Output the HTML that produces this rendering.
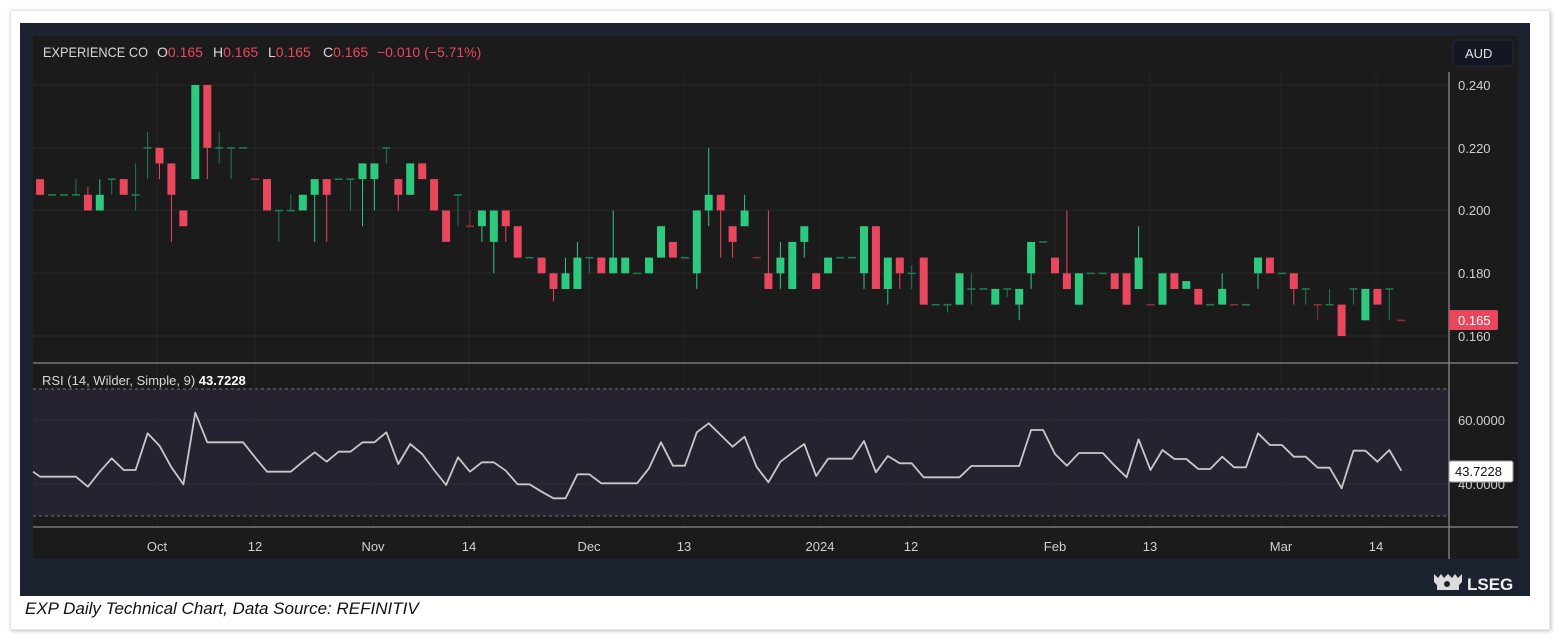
<!DOCTYPE html>
<html><head><meta charset="utf-8">
<style>
html,body{margin:0;padding:0;background:#fff;width:1561px;height:640px;overflow:hidden;font-family:"Liberation Sans",sans-serif}
.card{position:absolute;left:10px;top:10px;width:1538px;height:618px;background:#fff;box-shadow:1px 1px 4px rgba(0,0,0,.25);border:1px solid #e6e6e6}
.frame{position:absolute;left:20px;top:23px;width:1510px;height:573px;background:#1d2230}
svg{position:absolute;left:0;top:0}
.cap{position:absolute;left:25px;top:599px;font-style:italic;font-size:17px;color:#111}
</style></head><body>
<div class="card"></div>
<div class="frame"></div>
<svg id="s" width="1561" height="640" xmlns="http://www.w3.org/2000/svg" font-family="Liberation Sans, sans-serif">
<rect x="33" y="36" width="1485" height="523" fill="#1b1b1b"/>
<rect x="33" y="389" width="1416" height="127" fill="#262230"/>
<g stroke="#272727" stroke-width="1">
<line x1="33" y1="85" x2="1449" y2="85"/><line x1="33" y1="148" x2="1449" y2="148"/><line x1="33" y1="210" x2="1449" y2="210"/><line x1="33" y1="273" x2="1449" y2="273"/><line x1="33" y1="336" x2="1449" y2="336"/>
<line x1="33" y1="420" x2="1449" y2="420" stroke="#312c3a"/><line x1="33" y1="484" x2="1449" y2="484" stroke="#312c3a"/>
</g>
<g id="vg" stroke="#252525" stroke-width="1"></g>
<line x1="33" y1="389" x2="1449" y2="389" stroke="#777" stroke-dasharray="3,3"/>
<line x1="33" y1="516" x2="1449" y2="516" stroke="#777" stroke-dasharray="3,3"/>
<line x1="33" y1="363" x2="1518" y2="363" stroke="#8a8a8a" stroke-width="1.3"/>
<line x1="33" y1="527" x2="1518" y2="527" stroke="#8a8a8a" stroke-width="1.3"/>
<line x1="1449" y1="72" x2="1449" y2="559" stroke="#8a8a8a" stroke-width="1.3"/>
<g id="c"></g>
<polyline id="r" fill="none" stroke="#c8c8c8" stroke-width="1.8" stroke-linejoin="round"/>
<g font-size="14" fill="#d8d8d8">
<text x="43" y="57" textLength="105" lengthAdjust="spacingAndGlyphs">EXPERIENCE CO</text>
<text x="157" y="57">O<tspan fill="#e8475e">0.165</tspan></text>
<text x="213" y="57">H<tspan fill="#e8475e">0.165</tspan></text>
<text x="268" y="57">L<tspan fill="#e8475e">0.165</tspan></text>
<text x="323" y="57">C<tspan fill="#e8475e">0.165</tspan></text>
<text x="377" y="57" fill="#e8475e">−0.010 (−5.71%)</text>
</g>
<rect x="1453" y="40" width="60" height="26" rx="4" fill="#131722" stroke="#252a36"/>
<text x="1465" y="58" font-size="13" fill="#e0e0e0">AUD</text>
<g font-size="13" fill="#d0d0d0">
<text x="1458" y="90">0.240</text><text x="1458" y="153">0.220</text><text x="1458" y="215">0.200</text><text x="1458" y="278">0.180</text><text x="1458" y="341">0.160</text>
<text x="1458" y="425">60.0000</text><text x="1458" y="489">40.0000</text>
</g>
<rect x="1449" y="310" width="49" height="20" rx="2" fill="#e8475e"/>
<text x="1458" y="325" font-size="13" fill="#fff">0.165</text>
<rect x="1449" y="461" width="64" height="21" rx="2" fill="#fff" stroke="#999"/>
<text x="1455" y="476" font-size="13" fill="#111">43.7228</text>
<text x="42" y="385" font-size="13" fill="#d8d8d8">RSI (14, Wilder, Simple, 9)  <tspan font-weight="bold" fill="#fff">43.7228</tspan></text>
<g font-size="13" fill="#d0d0d0" text-anchor="middle">
<text x="157" y="551">Oct</text><text x="255" y="551">12</text><text x="373" y="551">Nov</text><text x="469" y="551">14</text><text x="589" y="551">Dec</text><text x="684" y="551">13</text><text x="820" y="551">2024</text><text x="911" y="551">12</text><text x="1055" y="551">Feb</text><text x="1150" y="551">13</text><text x="1281" y="551">Mar</text><text x="1376" y="551">14</text>
</g>
<path d="M1434 574 l4 4 l3-4 l3 4 l4-4 l4 4 l3-4 l3 4 l4-4 v8 l-3 3 v5 h-22 v-5 l-3-3z" fill="#dcdcdc"/>
<circle cx="1447" cy="584" r="3" fill="#1d2230"/>
<text x="1467" y="590" font-size="17" font-weight="bold" fill="#f0f0f0">LSEG</text>
</svg>
<div class="cap">EXP Daily Technical Chart, Data Source: REFINITIV</div>
<script>
var D=[[210,205,210,205],[205,205,205,205],[205,205,205,205],[205,205,210,205],[205,200,207.5,200],[200,205,210,200],[210,210,210,205],[210,205,210,205],[205,205,215,200],[220,220,225,210],
[220,215,220,210],[215,205,215,190],[200,195,200,195],[210,240,240,210],[240,220,240,210],[220,220,225,215],[220,220,220,210],[220,220,220,220],[210,210,210,210,1],[210,200,210,200],
[200,200,200,190],[200,200,205,200],[200,205,205,200],[205,210,210,190],[210,205,210,190],[210,210,210,210],[210,210,210,200],[210,215,215,195],[210,215,215,200],[220,220,220,215],
[210,205,210,200],[205,215,215,205],[215,210,215,210],[210,200,210,200],[200,190,200,190],[205,205,205,195],[195,195,200,195,1],[195,200,200,190],[190,200,200,180],[200,195,200,190],
[195,185,195,185],[185,185,185,185],[185,180,185,180],[180,175,180,171],[175,180,185,175],[175,185,190,175],[185,185,185,180],[185,180,185,180],[180,185,200,180],[180,185,185,180],
[180,180,180,180],[180,185,185,180],[185,195,195,185],[190,185,190,185],[185,185,185,185],[180,200,200,175],[200,205,220,195],[205,200,205,185],[195,190,195,185],[195,200,205,195],
[185,185,185,185,1],[180,175,200,175],[180,185,190,175],[175,190,190,175],[190,195,195,185],[180,175,180,175],[180,185,185,180],[185,185,185,185],[185,185,185,185],[180,195,195,175],
[195,175,195,175],[175,185,185,170],[185,180,185,175],[180,180,182.5,175],[185,170,185,170],[170,170,170,170],[170,170,170,167.5],[170,180,180,170],[175,175,180,170],[175,175,175,175],
[170,175,175,170],[175,175,175,172.5],[170,175,175,165],[180,190,190,175],[190,190,190,190],[185,180,185,180],[180,175,200,175],[170,180,180,170],[180,180,180,180],[180,180,180,180],
[180,175,180,175],[180,170,180,170],[175,185,195,175],[170,170,170,170,1],[170,180,180,170],[180,175,180,175],[175,177.5,177.5,175],[175,170,175,170],[170,170,170,170],[170,175,180,170],
[170,170,170,170,1],[170,170,170,170],[180,185,185,175],[185,180,185,180],[180,180,180,180],[180,175,180,170],[175,175,175,170],[170,170,170,165,1],[170,170,175,170],[170,160,170,160],
[175,175,175,170],[165,175,175,165],[175,170,175,170],[175,175,175,165],[165,165,165,165,1]];
var R=[290,290,290,290,320,275,235,270,270,160,197,262,313,98,187,187,187,187,232,275,275,275,245,217,245,215,215,187,187,157,252,192,222,270,315,232,275,247,247,272,313,313,335,355,355,283,283,310,310,310,310,265,187,257,257,157,130,165,200,170,
260,307,245,218,192,288,236,236,236,183,277,228,250,250,292,292,292,292,258,258,258,258,258,150,150,222,257,219,219,219,257,292,178,270,210,237,237,267,267,230,262,262,160,195,195,230,230,263,263,325,212,212,245,210,272];
function Y(p){return 85+(240-p)*3.1375}
var h='';
for(var i=0;i<D.length;i++){var d=D[i],x=40.1+i*11.94,o=d[0],c=d[1];
var up=d[4]?false:(c>=o);var col=up?'#2dc97e':'#e8475e';var wc=up?'#1f7a52':'#8c2f3c';
if(c!=o){wc=col;}
h+='<line x1="'+x.toFixed(1)+'" y1="'+Y(d[2]).toFixed(1)+'" x2="'+x.toFixed(1)+'" y2="'+Y(d[3]).toFixed(1)+'" stroke="'+wc+'" stroke-width="1"/>';
var t=Y(Math.max(o,c)),b=Y(Math.min(o,c));
if(b-t<1.5){h+='<rect x="'+(x-4).toFixed(1)+'" y="'+(t-0.7).toFixed(1)+'" width="8" height="1.6" fill="'+(up?'#1f7a52':'#8c2f3c')+'"/>';}
else h+='<rect x="'+(x-4).toFixed(1)+'" y="'+t.toFixed(1)+'" width="8" height="'+(b-t).toFixed(1)+'" fill="'+col+'"/>';}
document.getElementById('c').innerHTML=h;
var pts='33,'+(380+275/3).toFixed(1)+' ';
for(var i=0;i<R.length;i++){pts+=(40.1+i*11.94).toFixed(1)+','+(380+R[i]/3).toFixed(1)+' ';}
document.getElementById('r').setAttribute('points',pts);
var vx=[157,255,373,469,589,684,820,911,1055,1150,1281,1376],g='';
vx.forEach(function(x){g+='<line x1="'+x+'" y1="70" x2="'+x+'" y2="527"/>';});
document.getElementById('vg').innerHTML=g;
</script>
</body></html>
